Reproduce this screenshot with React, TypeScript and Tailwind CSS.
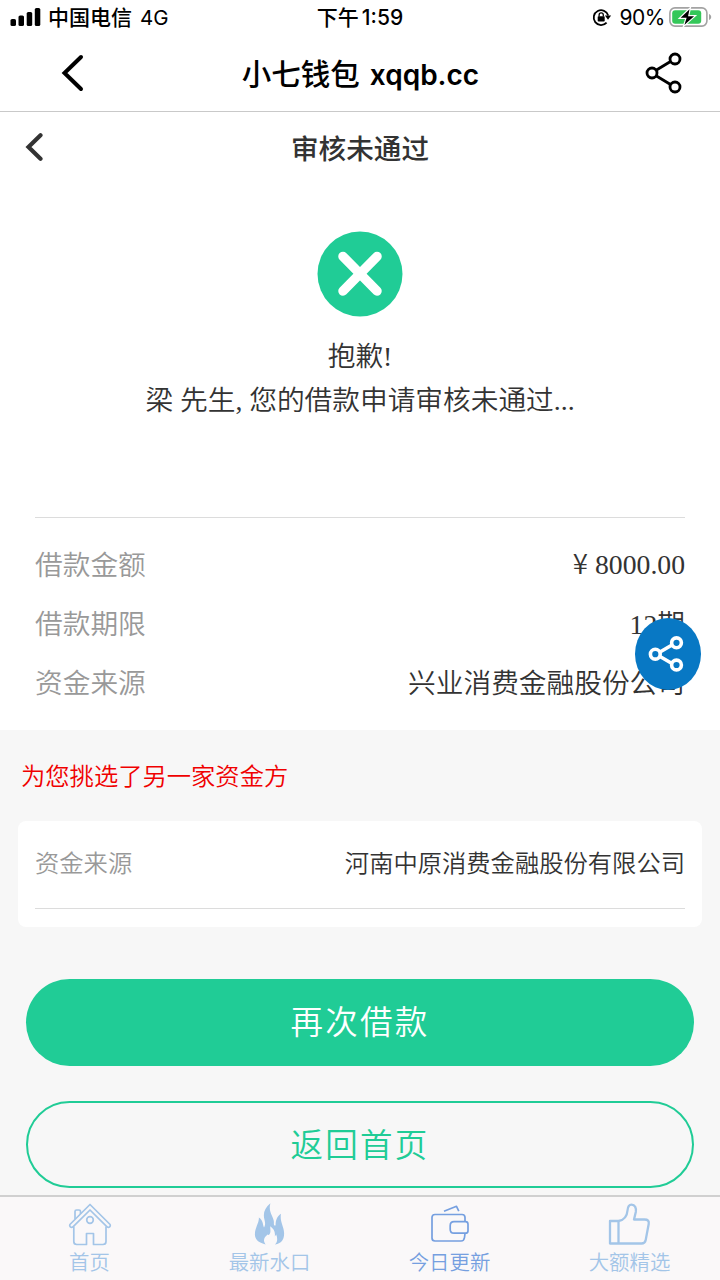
import type { ReactNode } from 'react'

interface RowProps {
  label: string
  value: ReactNode
}

interface TabProps {
  label: string
  active?: boolean
  children: ReactNode
}

function StatusBar() {
  return (
    <div className="flex h-9 items-center justify-between pr-2 pl-[10px] font-['Inter','Noto_Sans_CJK_SC',sans-serif] text-[21px] leading-9 font-medium text-black">
      <div className="flex w-[300px] items-center">
        <svg width="31" height="20" viewBox="0 0 31 20" fill="currentColor">
          <rect x="0.5" y="11" width="5.5" height="7" rx="1.6" />
          <rect x="8.5" y="7.5" width="5.5" height="10.5" rx="1.6" />
          <rect x="16.7" y="4" width="5.5" height="14" rx="1.6" />
          <rect x="24.8" y="0" width="5.5" height="18" rx="1.6" />
        </svg>
        <span className="ml-[7px]">中国电信</span>
        <span className="ml-[8px] text-[20.5px] font-normal">4G</span>
      </div>
      <span className="-translate-x-px whitespace-nowrap">
        下午<span className="ml-[3px]">1:59</span>
      </span>
      <div className="flex w-[300px] items-center justify-end">
        <svg width="20" height="20" viewBox="0 0 20 20" fill="none">
          <path d="M14.6 14.6A7.4 7.4 0 1 1 16.2 7.5" stroke="currentColor" strokeWidth="1.8" />
          <path d="M12.9 7.5h6.2l-3.1 4.2z" fill="currentColor" />
          <rect x="5.7" y="8.3" width="7" height="5.2" rx="0.8" fill="currentColor" />
          <path d="M7.1 8.5V6.9a2.1 2.1 0 0 1 4.2 0v1.6" stroke="currentColor" strokeWidth="1.3" />
        </svg>
        <span className="ml-[8px] text-[21px] font-normal tracking-[-0.5px]">90%</span>
        <svg className="ml-[4px] -translate-y-px" width="43" height="20" viewBox="0 0 43 20" fill="none">
          <rect x="0.9" y="0.9" width="37" height="18.2" rx="5" stroke="#a3a3a3" strokeWidth="1.6" />
          <rect x="3.2" y="3.2" width="29" height="13.6" rx="3" fill="#34c759" />
          <path d="M40 7v6c1.4-.5 2.2-1.6 2.2-3S41.4 7.5 40 7z" fill="#a3a3a3" />
          <path
            d="M21.5 0.5 10.2 11.3h6.600L14.3 19.6 26.6 8.700h-6.800z"
            fill="black"
            stroke="white"
            strokeWidth="1.2"
          />
        </svg>
      </div>
    </div>
  )
}

function BrowserBar() {
  return (
    <div className="flex h-19 items-center justify-between border-b border-[#c9c9c9] pr-[37px] pl-[61px] text-black">
      <svg className="-translate-y-px" width="24" height="38" viewBox="0 0 24 38" fill="none">
        <path d="M20 3 3.5 19 20 35" stroke="currentColor" strokeWidth="4" strokeLinecap="round" />
      </svg>
      <h1 className="mr-[9px] flex items-baseline pt-px font-['Inter','Noto_Sans_CJK_SC',sans-serif] text-[29.5px] font-medium whitespace-nowrap">
        小七钱包<span className="ml-[10px] text-[28px] font-semibold">xqqb.cc</span>
      </h1>
      <svg className="-translate-y-px" width="38" height="42" viewBox="0 0 38 42" fill="none" stroke="currentColor" strokeWidth="2.8">
        <path d="M11.5 18 25.5 9.5M11.5 24 25.5 32.5" />
        <circle cx="7" cy="21" r="5" />
        <circle cx="30" cy="7" r="5" />
        <circle cx="30" cy="35" r="5" />
      </svg>
    </div>
  )
}

function PageHeader() {
  return (
    <div className="flex h-[72px] items-center px-[25px] text-[#333]">
      <svg className="-translate-y-px" width="18" height="28" viewBox="0 0 18 28" fill="none">
        <path d="M15.5 2.3 3.5 14 15.5 25.7" stroke="currentColor" strokeWidth="4.2" strokeLinecap="round" />
      </svg>
      <h2 className="mr-[18px] flex-1 pt-[3px] text-center text-[27.6px] font-medium">审核未通过</h2>
    </div>
  )
}

function Row({ label, value }: RowProps) {
  return (
    <div className="flex h-[59px] items-center justify-between">
      <span className="text-[#999]">{label}</span>
      <span>{value}</span>
    </div>
  )
}

function Tab({ label, active, children }: TabProps) {
  return (
    <div
      className={`flex flex-1 flex-col items-center pt-[6px] ${active ? 'text-[#759fe0]' : 'text-[#a3c5e8]'}`}
    >
      <svg width="44" height="44" viewBox="0 0 44 44" fill="none" stroke="currentColor">
        {children}
      </svg>
      <span className="-ml-px text-[20.4px] leading-8">{label}</span>
    </div>
  )
}

function TabBar() {
  return (
    <nav className="flex h-[85px] shrink-0 border-t-2 border-[#d0d0d0] bg-[#faf8f9]">
      <Tab label="首页">
        <g strokeWidth="1.7" strokeLinejoin="round">
          <path d="M22 1.5 1.9 21.5a2 2 0 0 0 2.8 2.6L22 7l17.3 17.1a2 2 0 0 0 2.8-2.6z" />
          <path d="M5.8 23.5V38.5q0 3 3 3H18.5V30.5h7V41.5H35q3 0 3-3V23.5" />
          <path d="M7 16V8.5q0-1.5 1.5-1.5H11q1.5 0 1.5 1.5V11" />
          <circle cx="22" cy="17" r="3.3" />
        </g>
      </Tab>
      <Tab label="最新水口">
        <path
          d="M23.2 0.3C17.4 5 15.5 10.4 17.3 16.7C18 19.3 18.3 22.4 16.8 24.5C15.4 21.2 16 16.8 11.6 14.4C13 21-1.8 36.5 18.4 41.5C15.4 37.5 17 34 20.2 31.7C21.3 30.7 20.5 32.5 21.8 31.8C24 30 23 26 23 23.3C26.5 26 28.3 28.5 27.6 33.5L29 31.6C30.3 34.8 30.7 39 27.6 41.5C35.3 40.2 37 35.5 36.9 30C36.7 23.5 32.3 18.3 33.8 10.7C29.5 13 28.3 18.5 28.4 22.2C27.2 23.3 26.5 22 26.7 19.7C27.2 14.5 20.5 9.5 23.2 0.3Z"
          transform="translate(-0.8 0)"
          fill="currentColor"
          stroke="none"
        />
      </Tab>
      <Tab label="今日更新" active>
        <g strokeWidth="1.7" strokeLinejoin="round">
          <path d="M37 18v-3.5q0-3-3-3H7q-3 0-3 3V35q0 3 3 3h26q3 0 3.5-3.5l.5-4" />
          <path d="M37.5 18.7H26q-3.8 0-3.8 4v3.5q0 4 3.8 4h11.5q2.5 0 2.5-2.5v-6.5q0-2.5-2.5-2.5z" />
          <path d="M16 8.2 28.5 3.3l2.3 4.9" />
        </g>
      </Tab>
      <Tab label="大额精选">
        <g strokeWidth="2.3" strokeLinejoin="round">
          <path d="M2 18h8.5V40.5H2zM10.5 18c6-1 8.5-4 9-10.5.3-4 1.5-5.8 4-5.8 3.5 0 5 3.3 4.3 7.2L26 16.500h10.5q5 0 4.2 4.5l-3 16q-.7 3.5-4.2 3.500H10.5" />
        </g>
      </Tab>
    </nav>
  )
}

function FloatingShare() {
  return (
    <button className="absolute top-[618px] left-[635px] flex h-[72px] w-[66px] items-center justify-center rounded-[50%] bg-[#0878c4] text-white">
      <svg className="-translate-x-[2px]" width="36" height="36" viewBox="0 0 36 36" fill="none" stroke="currentColor" strokeWidth="3.6">
        <path d="M12 16 24 9M12 20.5 24 27.5" />
        <circle cx="7.3" cy="18.2" r="4.9" />
        <circle cx="28.5" cy="6.8" r="4.9" />
        <circle cx="28.5" cy="29" r="4.9" />
      </svg>
    </button>
  )
}

function Amount() {
  return (
    <span className="relative -top-px">
      <span className="mr-[7px] font-['Noto_Sans_CJK_SC',sans-serif] leading-none">¥</span>8000.00
    </span>
  )
}

function App() {
  return (
    <div className="relative flex h-[1280px] w-[720px] flex-col overflow-hidden bg-white font-['Liberation_Serif','Noto_Sans_CJK_SC',sans-serif] font-[350] text-[#333]">
      <StatusBar />
      <BrowserBar />
      <PageHeader />

      <section className="flex h-[332px] shrink-0 flex-col items-center pt-[47px] text-[27.7px] leading-[44px]">
        <svg width="86" height="86" viewBox="0 0 86 86">
          <circle cx="43" cy="43" r="42.5" fill="#20cc96" />
          <path d="M26 25.5 60 60M60 25.5 26 60" stroke="white" strokeWidth="9.5" strokeLinecap="round" />
        </svg>
        <p className="mt-[18px]">抱歉!</p>
        <p>梁 先生, 您的借款申请审核未通过...</p>
      </section>

      <section className="mx-[35px] mt-px h-[213px] shrink-0 border-t border-[#dcdcdc] pt-[18px] text-[27.7px]">
        <Row label="借款金额" value={<Amount />} />
        <Row label="借款期限" value="12期" />
        <Row label="资金来源" value="兴业消费金融股份公司" />
      </section>

      <main className="flex-1 bg-[#f7f7f7]">
        <p className="px-[21px] pt-[25px] text-[24.3px] leading-[44px] text-[#f00000]">为您挑选了另一家资金方</p>
        <div className="mx-[18px] mt-[22px] h-[106px] rounded-lg bg-white px-[17px]">
          <div className="flex h-[88px] items-center justify-between border-b border-[#dcdcdc] text-[24.3px]">
            <span className="text-[#999]">资金来源</span>
            <span>河南中原消费金融股份有限公司</span>
          </div>
        </div>
        <div className="mx-[26px] mt-[52px] flex flex-col gap-[35px] text-[32.5px] tracking-[2.2px]">
          <button className="h-[87px] rounded-full bg-[#20cc96] pt-[2px] text-white">再次借款</button>
          <button className="h-[87px] rounded-full border-2 border-[#20cc96] pt-[3px] text-[#20cc96]">返回首页</button>
        </div>
      </main>

      <TabBar />
      <FloatingShare />
    </div>
  )
}

export default App
